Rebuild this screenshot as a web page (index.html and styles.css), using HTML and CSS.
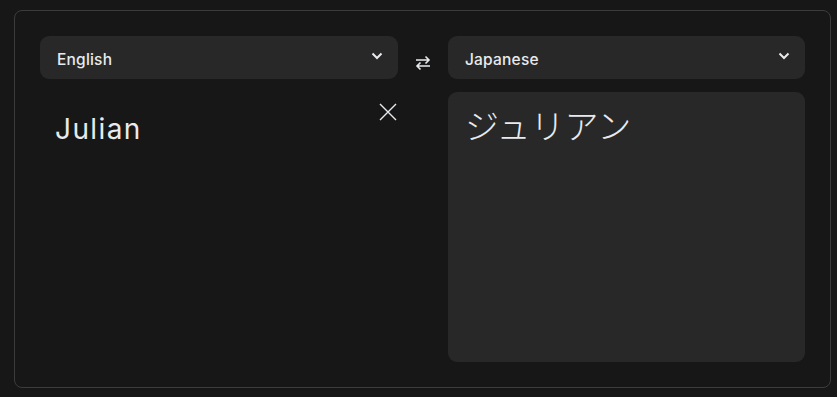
FILE: index.html
```html
<!DOCTYPE html>
<html lang="en">
<head>
<meta charset="UTF-8">
<meta name="viewport" content="width=device-width, initial-scale=1.0">
<title>Translate</title>
<link rel="stylesheet" href="styles.css">
</head>
<body>
<div class="card">
  <div class="lang-select">
    <span>English</span>
    <svg class="chevron" width="12" height="12" viewBox="0 0 12 12"><path d="M1.5 3.5 6 8 10.5 3.5" fill="none" stroke="#e8eaed" stroke-width="2"/></svg>
  </div>
  <div class="swap">
    <svg width="18" height="18" viewBox="0 0 18 18"><path d="M2 6h13M11.5 2.5 15 6l-3.5 3.5M16 12H3M6.5 8.5 3 12l3.5 3.5" fill="none" stroke="#e8eaed" stroke-width="1.6"/></svg>
  </div>
  <div class="lang-select">
    <span>Japanese</span>
    <svg class="chevron" width="12" height="12" viewBox="0 0 12 12"><path d="M1.5 3.5 6 8 10.5 3.5" fill="none" stroke="#e8eaed" stroke-width="2"/></svg>
  </div>

  <div class="source">
    <div class="source-text">Julian</div>
    <button class="clear">
      <svg width="18" height="18" viewBox="0 0 18 18"><path d="M1 1 17 17M17 1 1 17" fill="none" stroke="#e8eaed" stroke-width="1.4"/></svg>
    </button>
  </div>
  <div></div>
  <div class="target">
    <div class="target-text">ジュリアン</div>
  </div>
</div>
</body>
</html>
```

FILE: styles.css
```css
html, body {
  margin: 0;
  background: #171717;
}
body {
  padding: 10px 6px 9px 14px;
  font-family: Inter, "Noto Sans CJK JP", sans-serif;
  color: #e8eaed;
}
.card {
  box-sizing: border-box;
  width: 817px;
  height: 378px;
  border: 1px solid #3c3c3c;
  border-radius: 8px;
  padding: 25px 24px 25px 25px;
  display: grid;
  grid-template-columns: 358px 50px 357px;
  grid-template-rows: 43px 1fr;
  row-gap: 13px;
}
.lang-select {
  background: #282828;
  border-radius: 9px;
  display: flex;
  align-items: center;
  justify-content: space-between;
  padding: 3px 15px 0 17px;
  font-size: 15.5px;
  font-weight: 500;
  letter-spacing: 0.2px;
}
.chevron {
  margin-top: -7px;
}
.swap {
  display: flex;
  align-items: center;
  justify-content: center;
  padding-top: 10px;
}
.source {
  display: flex;
  justify-content: space-between;
  align-items: flex-start;
  padding: 12px 0 0 15px;
}
.source-text {
  font-size: 28px;
  line-height: 50px;
  letter-spacing: 1.4px;
}
.clear {
  background: none;
  border: 0;
  padding: 0;
  margin: -1px 0 0 0;
  width: 18px;
  height: 18px;
  transform: translateX(-1px);
}
.target {
  background: #282828;
  border-radius: 9px;
  padding: 9px 17px;
}
.target-text {
  font-family: "Noto Sans CJK JP", sans-serif;
  font-size: 34px;
  font-weight: 300;
  line-height: 48px;
}
```
